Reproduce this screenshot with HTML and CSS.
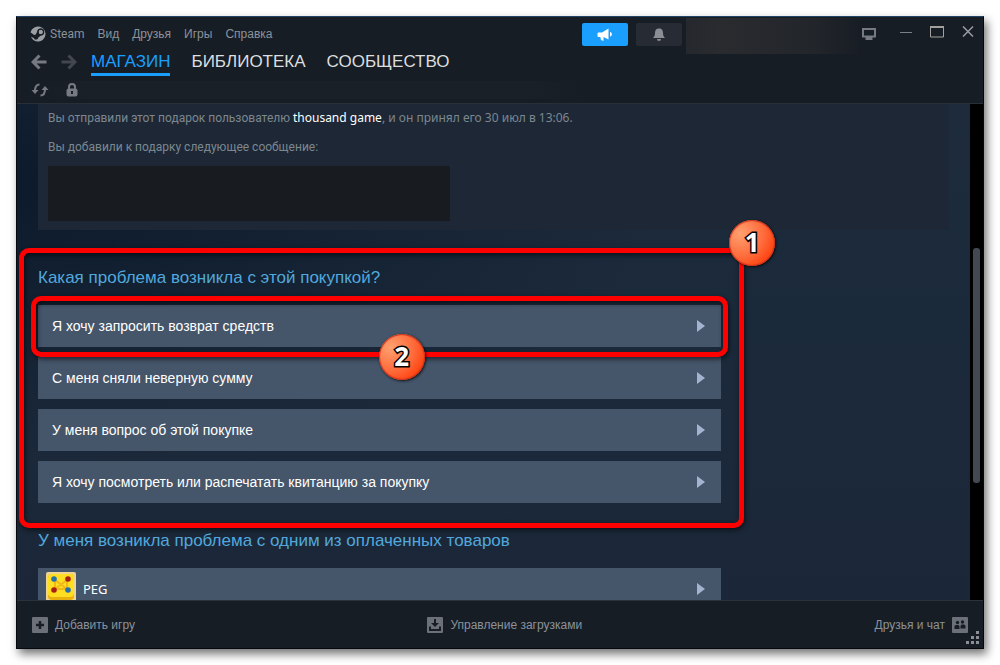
FILE: index.html
```html
<!DOCTYPE html>
<html lang="ru">
<head>
  <meta charset="UTF-8" />
  <meta name="viewport" content="width=device-width, initial-scale=1.0" />
  <title>Steam</title>
  <link rel="stylesheet" href="styles.css">
</head>
<body>

  <div class="window">
    <header class="header">
      <div class="header-left">
        <div class="menu">
          <button class="menu-item steam">
            <svg width="16" height="16" viewBox="0 0 16 16">
              <path d="M.6 6.500A7.500 7.500 0 1 1 1 10.800l2.800 1.200a2.300 2.300 0 0 0 4.500-.6l2.600-2a3.500 3.500 0 1 0-3.700-3.600L5.500 8.800a2.300 2.300 0 0 0-1.200.2z" fill="#9b9ea3"/>
              <circle cx="10.800" cy="6" r="2.200" fill="#9b9ea3"/>
              <circle cx="10.800" cy="6" r="3" fill="none" stroke="#171d25"/>
            </svg>
            Steam
          </button>
          <button class="menu-item">Вид</button>
          <button class="menu-item">Друзья</button>
          <button class="menu-item">Игры</button>
          <button class="menu-item">Справка</button>
        </div>

        <nav class="nav">
          <button class="icon-btn" aria-label="Назад">
            <svg width="16" height="16" viewBox="0 0 16 16" fill="none" stroke="#777b81" stroke-width="3"><path d="M15.500 8H3M8.500 1.500L2 8l6.500 6.500"/></svg>
          </button>
          <button class="icon-btn forward" aria-label="Вперед">
            <svg width="16" height="16" viewBox="0 0 16 16" fill="none" stroke="#43474e" stroke-width="3"><path d="M.5 8H13M7.500 1.500L14 8l-6.500 6.500"/></svg>
          </button>
          <a class="nav-link active" href="#">МАГАЗИН</a>
          <a class="nav-link" href="#">БИБЛИОТЕКА</a>
          <a class="nav-link" href="#">СООБЩЕСТВО</a>
        </nav>

        <div class="address">
          <button class="icon-btn" aria-label="Обновить">
            <svg width="18" height="14" viewBox="0 0 18 14">
              <path d="M8.500 1.500C5.500 1.500 4 4 4 8M9.500 12.500c3 0 4.500-2.500 4.500-6.500" fill="none" stroke="#777b81" stroke-width="2"/>
              <path d="M.5 7h7L4 11zM10.500 7h7L14 3z" fill="#777b81"/>
            </svg>
          </button>
          <svg class="lock" width="12" height="14" viewBox="0 0 12 14">
            <path d="M3 7V4a3 3 0 0 1 6 0v3" fill="none" stroke="#777b81" stroke-width="2"/>
            <rect x=".5" y="5.500" width="11" height="8" rx="2" fill="#777b81"/>
            <path d="M6 8v3" stroke="#1a1f27" stroke-width="2"/>
          </svg>
        </div>
      </div>

      <div class="header-right">
        <button class="top-btn news" aria-label="Новости">
          <svg width="16" height="14" viewBox="0 0 16 14" fill="#fff">
            <path d="M1.500 4.500H5L11.500.5v11L6.500 9v4L4 12 3.300 9H1.500A1.300 1.300 0 0 1 .5 8V5.500a1.200 1.200 0 0 1 1-1z"/>
            <path d="M13 4c2.500.5 2.500 4 0 4.500z"/>
          </svg>
        </button>
        <button class="top-btn" aria-label="Уведомления">
          <svg width="14" height="14" viewBox="0 0 14 14" fill="#8b8f95">
            <path d="M7 .5c3 0 4 2 4 4.500 0 2.500.8 3.500 2 5H1c1.200-1.500 2-2.500 2-5C3 2.500 4 .5 7 .5zM5 11h4a2 2 0 0 1-4 0z"/>
          </svg>
        </button>
        <div class="profile"></div>
        <div class="controls">
          <button class="icon-btn" aria-label="Big Picture">
            <svg width="14" height="12" viewBox="0 0 14 12"><path d="M1 1h12v7.500H1z" fill="none" stroke="#777b81" stroke-width="2"/><path d="M3.500 9h7v3h-7z" fill="#777b81"/></svg>
          </button>
          <button class="icon-btn" aria-label="Свернуть">
            <svg width="14" height="14" viewBox="0 0 14 14"><path d="M1 7.500h12" stroke="#7b8087"/></svg>
          </button>
          <button class="icon-btn" aria-label="Развернуть">
            <svg width="14" height="14" viewBox="0 0 14 14"><path d="M.5 1.500h13v10.500H.5z" fill="none" stroke="#a2a19c"/><path d="M0 2h14" stroke="#a2a19c" stroke-width="2"/></svg>
          </button>
          <button class="icon-btn" aria-label="Закрыть">
            <svg width="14" height="14" viewBox="0 0 14 14"><path d="M2 1.500l10 10M12 1.500l-10 10" stroke="#9b9ea3" stroke-width="1.500"/></svg>
          </button>
        </div>
      </div>
    </header>

    <main class="content">
      <div class="page">
        <section class="gift">
          <p>Вы отправили этот подарок пользователю <a href="#">thousand game</a><span class="gift-date">, и он принял его 30 июл в 13:06.</span></p>
          <p>Вы добавили к подарку следующее сообщение:</p>
          <div class="gift-message"></div>
        </section>

        <section class="problem">
          <h2>Какая проблема возникла с этой покупкой?</h2>
          <ul class="options">
            <li class="marked">
              <button class="option">Я хочу запросить возврат средств <i class="arrow"></i></button>
              <span class="badge badge-two">2</span>
            </li>
            <li><button class="option">С меня сняли неверную сумму <i class="arrow"></i></button></li>
            <li><button class="option">У меня вопрос об этой покупке <i class="arrow"></i></button></li>
            <li><button class="option">Я хочу посмотреть или распечатать квитанцию за покупку <i class="arrow"></i></button></li>
          </ul>
          <span class="badge badge-one">1</span>
        </section>

        <section class="items">
          <h2>У меня возникла проблема с одним из оплаченных товаров</h2>
          <ul class="options">
            <li>
              <button class="option product">
                <svg width="30" height="34" viewBox="0 0 30 34">
                  <rect width="30" height="34" rx="2" fill="#f0d492"/>
                  <rect x="2" y="2" width="26" height="26" rx="4" fill="#e8b00c"/>
                  <rect x="2" y="2" width="26" height="23" rx="4" fill="#ffdd20"/>
                  <path d="M9 8l12 9M21 8L9 17M9 8v9h12V8" fill="none" stroke="#f0b818" stroke-width="2"/>
                  <circle cx="8" cy="7" r="2.800" fill="#256fae"/><circle cx="22" cy="7" r="2.800" fill="#a81e12"/>
                  <circle cx="8" cy="18" r="2.800" fill="#a81e12"/><circle cx="22" cy="18" r="2.800" fill="#256fae"/>
                </svg>
                PEG <i class="arrow"></i>
              </button>
            </li>
          </ul>
        </section>
      </div>
      <div class="scrollbar"><div class="thumb"></div></div>
    </main>

    <footer class="footer">
      <button class="footer-btn">
        <svg width="16" height="16" viewBox="0 0 16 16"><rect width="16" height="16" rx="1" fill="#6c7179"/><path d="M8 4v8M4 8h8" stroke="#171d25" stroke-width="2.500"/></svg>
        Добавить игру
      </button>
      <button class="footer-btn">
        <svg width="16" height="16" viewBox="0 0 16 16"><rect width="16" height="16" rx="1" fill="#6c7179"/><path d="M8 2v5M3 9.500V13h10V9.500" fill="none" stroke="#171d25" stroke-width="2"/><path d="M4 6h8l-4 4z" fill="#171d25"/></svg>
        Управление загрузками
      </button>
      <button class="footer-btn">
        Друзья и чат
        <svg width="16" height="16" viewBox="0 0 16 16"><rect width="16" height="16" rx="1" fill="#6c7179"/><g fill="#171d25"><circle cx="5.500" cy="5.500" r="1.700"/><circle cx="10.500" cy="5" r="1.700"/><path d="M2.500 12V9.500a1.500 1.500 0 0 1 1.500-1.500h2.500l1 1.500V12zM8.500 11.500V9L9.500 7.500H12a1.500 1.500 0 0 1 1.500 1.500v2.500z"/></g></svg>
      </button>
      <svg class="grip" width="14" height="14" viewBox="0 0 14 14" fill="#8b8f95"><path d="M11 0h3v3h-3zM11 5h3v3h-3zM11 10h3v3h-3zM6 5h3v3H6zM6 10h3v3H6zM1 10h3v3H1z"/></svg>
    </footer>
  </div>

</body>
</html>
```

FILE: styles.css
```css
* {
  box-sizing: border-box;
}

body {
  margin: 0;
  padding: 16px;
  height: 100vh;
  background: #fff;
  font-family: "Liberation Sans", Arial, sans-serif;
  overflow: hidden;
}

button {
  border: 0;
  padding: 0;
  margin: 0;
  background: none;
  color: inherit;
  font: inherit;
  cursor: pointer;
}

svg {
  display: block;
  flex: none;
}

ul, p, h2 {
  margin: 0;
  padding: 0;
  list-style: none;
}

.window {
  height: 100%;
  display: flex;
  flex-direction: column;
  background: #171d25;
  border: 1px solid #05080c;
  border-top-color: #214468;
  box-shadow: 3px 5px 9px rgba(0, 0, 0, 0.55);
}

/* header */

.header {
  display: flex;
  justify-content: space-between;
  height: 87px;
  border-bottom: 1px solid #2a2f37;
}

.header-left {
  flex: 1;
  display: flex;
  flex-direction: column;
}

.menu {
  display: flex;
  align-items: center;
  gap: 13px;
  height: 34px;
  padding-left: 13px;
  font-size: 12px;
  color: #8b929a;
}

.steam {
  display: flex;
  align-items: center;
  gap: 4px;
  font-family: Roboto, sans-serif;
}

.nav {
  display: flex;
  align-items: center;
  height: 22px;
  padding-left: 14px;
}

.icon-btn {
  display: flex;
}

.forward {
  margin: 0 14px;
}

.nav-link {
  padding-top: 2px;
  margin-right: 21px;
  font-size: 17px;
  line-height: 22px;
  color: #dcdedf;
  text-decoration: none;
  border-bottom: 3px solid transparent;
}

.nav-link.active {
  color: #1a9fff;
  border-bottom-color: #1a9fff;
}

.address {
  display: flex;
  align-items: center;
  gap: 17px;
  height: 18px;
  margin: 8px 0 0 14px;
  background: linear-gradient(90deg, #171d25, #1a2028 60px, #1a2028 90%, #171d25);
}

.header-right {
  display: flex;
  align-items: flex-start;
}

.top-btn {
  display: flex;
  align-items: center;
  justify-content: center;
  width: 46px;
  height: 23px;
  margin: 6px 8px 0 0;
  border-radius: 2px;
  background: #272c34;
}

.news {
  background: #1a9fff;
}

.profile {
  width: 172px;
  height: 36px;
  margin: 1px 4px 0 -4px;
  background: linear-gradient(90deg, #25282d, #292b2f 20%, #22252a 75%, #181e25);
}

.controls {
  display: flex;
  align-items: center;
  height: 30px;
  gap: 17px;
  padding-right: 8px;
}

.controls .icon-btn:first-child {
  margin-right: 6px;
  padding-top: 4px;
}

/* store page */

.content {
  flex: 1;
  min-height: 0;
  display: flex;
  overflow: hidden;
}

.page {
  flex: 1;
  padding: 0 21px;
  background: radial-gradient(ellipse 650px 280px at 0 80px, #0c1a2b, rgba(12, 26, 43, 0)), linear-gradient(#1d2b3d, #1b2a3b 45%, #1b2738);
}

.gift {
  height: 126px;
  padding: 4px 10px 0;
  background: #1d2735;
  font-family: Roboto, sans-serif;
  font-size: 12px;
  line-height: 20px;
  color: #7c8791;
}

.gift p {
  margin-bottom: 9px;
}

.gift a {
  color: #fff;
  text-decoration: none;
}

.gift a, .gift-date {
  font-family: "Noto Sans", sans-serif;
}

.gift-message {
  width: 402px;
  max-width: 100%;
  height: 55px;
  background: #181b20;
}

.problem, .items {
  position: relative;
  width: 75%;
}

.problem {
  margin-top: 38px;
}

.items {
  margin-top: 28px;
}

h2 {
  margin-bottom: 17px;
  font-size: 17px;
  line-height: 20px;
  font-weight: normal;
  color: #52a8dc;
}

.options {
  display: flex;
  flex-direction: column;
  gap: 10px;
}

.option {
  display: flex;
  align-items: center;
  width: 100%;
  height: 42px;
  padding: 0 16px 0 14px;
  background: #45556a;
  color: #fff;
  font-size: 14px;
  text-align: left;
}

.product {
  gap: 7px;
  padding-left: 8px;
  font-family: "Noto Sans", sans-serif;
  font-size: 13px;
}

.arrow {
  margin-left: auto;
  border-left: 8px solid #a3b4d0;
  border-top: 6px solid transparent;
  border-bottom: 6px solid transparent;
}

/* numbered frames over the options */

.marked {
  position: relative;
  z-index: 1;
}

.problem::after, .marked::after {
  content: "";
  position: absolute;
  border: 5px solid #f00;
  border-radius: 10px;
  box-shadow: 1px 2px 5px rgba(0, 0, 0, 0.6), inset 1px 2px 5px rgba(0, 0, 0, 0.6);
  pointer-events: none;
}

.problem::after {
  inset: -20px -23px -25px -19px;
}

.marked::after {
  inset: -9px -7px -10px -7px;
}

.badge {
  position: absolute;
  z-index: 2;
  width: 46px;
  height: 46px;
  border-radius: 50%;
  background: radial-gradient(circle at 25% 30%, #ffa070, #ff6a3a 50%, #ff3200 90%);
  box-shadow: inset 0 0 1px 1px #c8321a, 1px 1px 3px rgba(0, 0, 0, 0.8);
  color: #fff;
  font: bold 26px/44px "Noto Sans", sans-serif;
  text-align: center;
  -webkit-text-stroke: 3px #000;
  paint-order: stroke fill;
}

.badge-one {
  top: -48px;
  right: -54px;
}

.badge-two {
  top: 29px;
  left: calc(50% - 1px);
}

.scrollbar {
  width: 13px;
  padding: 144px 3px 0;
  background: #000;
}

.thumb {
  height: 235px;
  border-radius: 3px;
  background: #434953;
}

/* footer */

.footer {
  position: relative;
  display: flex;
  align-items: center;
  justify-content: space-between;
  height: 48px;
  padding: 0 15px;
  border-top: 1px solid #2b323c;
  font-size: 12px;
  color: #8b929a;
}

.footer-btn {
  display: flex;
  align-items: center;
  gap: 7px;
}

.grip {
  position: absolute;
  right: 4px;
  bottom: 3px;
}
```
